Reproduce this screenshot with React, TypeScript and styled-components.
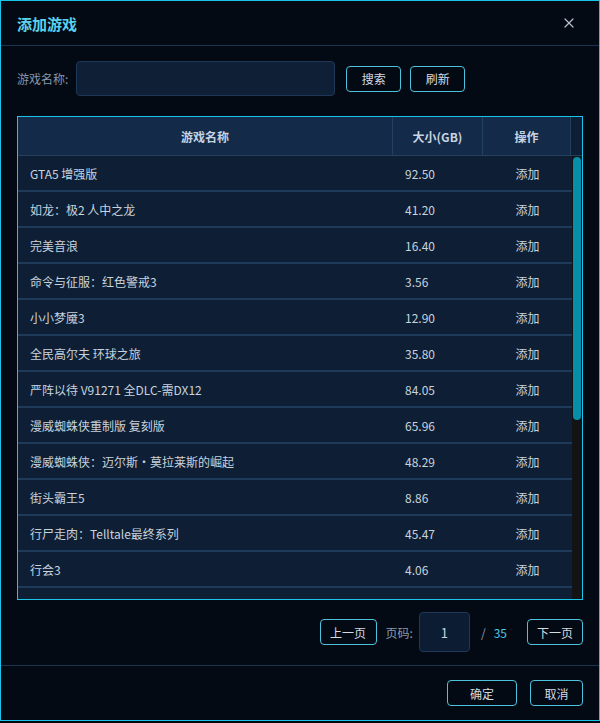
import styled, { createGlobalStyle } from 'styled-components';
import { X } from 'lucide-react';

const GlobalStyle = createGlobalStyle`
  * { box-sizing: border-box; }
  body {
    margin: 0;
    background: #03070e;
    font-family: "Noto Sans CJK SC", "Noto Sans", sans-serif;
  }
`;

const Dialog = styled.div`
  width: 600px;
  background: #040a14;
  border: 1px solid #19c3ea;
  display: flex;
  flex-direction: column;
`;

const Header = styled.div`
  height: 45px;
  padding: 0 16px;
  border-bottom: 1px solid #1c3251;
  display: flex;
  align-items: center;
  justify-content: space-between;
`;

const Title = styled.h3`
  margin: 0;
  font-size: 15px;
  font-weight: bold;
  color: #5ad2ee;
`;

const CloseButton = styled.button`
  width: 24px;
  height: 24px;
  margin-right: 2px;
  padding: 0;
  border: none;
  background: transparent;
  color: #b3c1ce;
  display: flex;
  align-items: center;
  justify-content: center;
  cursor: pointer;
`;

const Body = styled.div`
  padding: 15px 16px 13px;
  display: flex;
  flex-direction: column;
`;

const SearchRow = styled.div`
  height: 35px;
  display: flex;
  align-items: center;
`;

const Label = styled.span`
  font-size: 12px;
  color: #8696ab;
  margin-right: 8px;
`;

const SearchInput = styled.input`
  width: 259px;
  height: 35px;
  background: #0e1f36;
  border: 1px solid #1d3858;
  border-radius: 4px;
  color: #d0dae4;
  outline: none;
  margin-right: 11px;
`;

const Button = styled.button<{ $w?: number }>`
  height: 26px;
  width: ${(p) => (p.$w ? `${p.$w}px` : 'auto')};
  padding: 0;
  background: transparent;
  border: 1px solid #4cc2dc;
  border-radius: 4px;
  color: #d3dbe3;
  font-family: inherit;
  font-size: 12px;
  white-space: nowrap;
  flex-shrink: 0;
  cursor: pointer;
`;

const ButtonGroup = styled.div<{ $gap: number }>`
  display: flex;
  align-items: center;
  gap: ${(p) => p.$gap}px;
`;

const TableWrap = styled.div`
  margin-top: 20px;
  height: 484px;
  border: 1px solid #19c3ea;
  display: flex;
  flex-direction: column;
  background: #0e1f35;
`;

const HeadRow = styled.div`
  display: grid;
  grid-template-columns: 375px 90px 88px 1fr;
  height: 39px;
  border-bottom: 1px solid #23405f;
  flex-shrink: 0;
`;

const HeadCell = styled.div<{ $gutter?: boolean }>`
  background: ${(p) => (p.$gutter ? '#0e1f35' : '#132a48')};
  border-right: ${(p) => (p.$gutter ? 'none' : '1px solid #23405f')};
  display: flex;
  align-items: center;
  justify-content: center;
  font-size: 12px;
  font-weight: bold;
  color: #c6d3e1;
`;

const BodyArea = styled.div`
  flex: 1;
  min-height: 0;
  display: flex;
`;

const RowList = styled.div`
  flex: 1;
  overflow: hidden;
`;

const ScrollTrack = styled.div`
  width: 10px;
  flex-shrink: 0;
  background: #111315;
  padding: 1px 1px 0 1px;
`;

const ScrollThumb = styled.div`
  height: 263px;
  border-radius: 4px;
  background: #078ea8;
`;

const Row = styled.div`
  display: grid;
  grid-template-columns: 375px 90px 1fr;
  height: 36px;
  border-bottom: 2px solid #1e3a5b;
  background: #0e1f35;
`;

const Cell = styled.div<{ $align?: 'left' | 'center' }>`
  display: flex;
  align-items: center;
  justify-content: ${(p) => (p.$align === 'center' ? 'center' : 'flex-start')};
  padding-left: ${(p) => (p.$align === 'center' ? '0' : '12px')};
  font-size: 12px;
  color: #c8d3de;
  white-space: nowrap;
`;

const Pager = styled.div`
  margin-top: 12px;
  height: 40px;
  display: flex;
  align-items: center;
  justify-content: flex-end;
`;

const PageLabel = styled.span`
  font-size: 12px;
  color: #8a9aae;
  margin: 0 6px 0 9px;
`;

const PageInput = styled.input`
  width: 51px;
  height: 40px;
  background: #0c1d33;
  border: 1px solid #1d3858;
  border-radius: 4px;
  color: #c8d3de;
  text-align: center;
  font-family: inherit;
  font-size: 13px;
  outline: none;
`;

const Slash = styled.span`
  font-size: 12px;
  color: #8a9aae;
  margin: 0 8px 0 11px;
`;

const Total = styled.span`
  font-size: 12px;
  color: #4ec6e6;
  margin-right: 20px;
`;

const Footer = styled.div`
  border-top: 1px solid #1c3251;
  padding: 14px 16px;
  display: flex;
  justify-content: flex-end;
`;

const games: [string, string][] = [
  ['GTA5 增强版', '92.50'],
  ['如龙：极2 人中之龙', '41.20'],
  ['完美音浪', '16.40'],
  ['命令与征服：红色警戒3', '3.56'],
  ['小小梦魇3', '12.90'],
  ['全民高尔夫 环球之旅', '35.80'],
  ['严阵以待 V91271 全DLC-需DX12', '84.05'],
  ['漫威蜘蛛侠重制版 复刻版', '65.96'],
  ['漫威蜘蛛侠：迈尔斯·莫拉莱斯的崛起', '48.29'],
  ['街头霸王5', '8.86'],
  ['行尸走肉：Telltale最终系列', '45.47'],
  ['行会3', '4.06'],
];

export default function App() {
  return (
    <>
      <GlobalStyle />
      <Dialog>
        <Header>
          <Title>添加游戏</Title>
          <CloseButton>
            <X size={16} strokeWidth={1.8} />
          </CloseButton>
        </Header>
        <Body>
          <SearchRow>
            <Label>游戏名称:</Label>
            <SearchInput />
            <ButtonGroup $gap={9}>
              <Button $w={55}>搜索</Button>
              <Button $w={55}>刷新</Button>
            </ButtonGroup>
          </SearchRow>
          <TableWrap>
            <HeadRow>
              <HeadCell>游戏名称</HeadCell>
              <HeadCell>大小(GB)</HeadCell>
              <HeadCell>操作</HeadCell>
              <HeadCell $gutter />
            </HeadRow>
            <BodyArea>
              <RowList>
                {games.map(([name, size]) => (
                  <Row key={name}>
                    <Cell>{name}</Cell>
                    <Cell>{size}</Cell>
                    <Cell $align="center">添加</Cell>
                  </Row>
                ))}
                <Row />
              </RowList>
              <ScrollTrack>
                <ScrollThumb />
              </ScrollTrack>
            </BodyArea>
          </TableWrap>
          <Pager>
            <Button $w={57}>上一页</Button>
            <PageLabel>页码:</PageLabel>
            <PageInput defaultValue="1" />
            <Slash>/</Slash>
            <Total>35</Total>
            <Button $w={56}>下一页</Button>
          </Pager>
        </Body>
        <Footer>
          <ButtonGroup $gap={13}>
            <Button $w={70}>确定</Button>
            <Button $w={53}>取消</Button>
          </ButtonGroup>
        </Footer>
      </Dialog>
    </>
  );
}
